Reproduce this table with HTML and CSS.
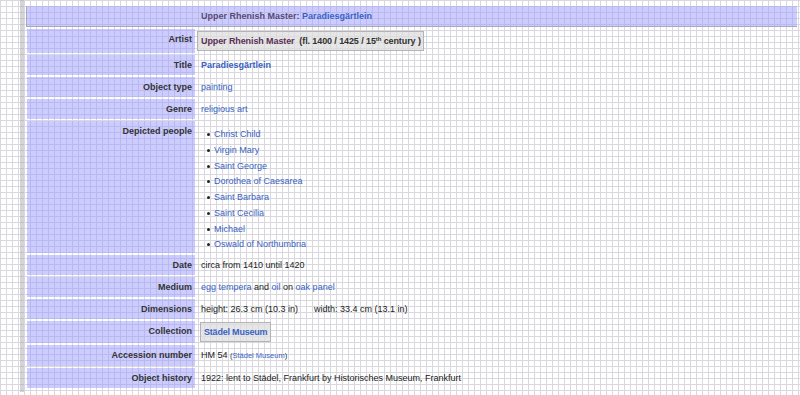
FILE: index.html
```html
<!DOCTYPE html>
<html>
<head>
<meta charset="utf-8">
<link rel="stylesheet" href="styles.css">
</head>
<body>
<div class="page">
  <div class="infobox">
    <div class="head"><span class="head-creator">Upper Rhenish Master:</span> <a class="link">Paradiesgärtlein</a></div>

    <div class="label">Artist</div>
    <div class="value boxed"><span class="box"><span class="creator">Upper Rhenish Master</span>&nbsp; (fl. 1400 / 1425 / 15<sup>th</sup> century )</span></div>

    <div class="label">Title</div>
    <div class="value"><a class="link bold">Paradiesgärtlein</a></div>

    <div class="label">Object type</div>
    <div class="value"><a class="link">painting</a></div>

    <div class="label">Genre</div>
    <div class="value"><a class="link">religious art</a></div>

    <div class="label">Depicted people</div>
    <div class="value list-cell">
      <ul class="people">
        <li><a class="link">Christ Child</a></li>
        <li><a class="link">Virgin Mary</a></li>
        <li><a class="link">Saint George</a></li>
        <li><a class="link">Dorothea of Caesarea</a></li>
        <li><a class="link">Saint Barbara</a></li>
        <li><a class="link">Saint Cecilia</a></li>
        <li><a class="link">Michael</a></li>
        <li><a class="link">Oswald of Northumbria</a></li>
      </ul>
    </div>

    <div class="label">Date</div>
    <div class="value">circa from 1410 until 1420</div>

    <div class="label">Medium</div>
    <div class="value"><a class="link">egg tempera</a> and <a class="link">oil</a> on <a class="link">oak panel</a></div>

    <div class="label">Dimensions</div>
    <div class="value"><span class="dim">height: 26.3 cm (10.3 in)</span><span>width: 33.4 cm (13.1 in)</span></div>

    <div class="label">Collection</div>
    <div class="value boxed-coll"><span class="box box-coll"><a class="link bold">Städel Museum</a></span></div>

    <div class="label">Accession number</div>
    <div class="value">HM 54 <span class="small">(<a class="link">Städel Museum</a>)</span></div>

    <div class="label">Object history</div>
    <div class="value">1922: lent to Städel, Frankfurt by Historisches Museum, Frankfurt</div>
  </div>
</div>
</body>
</html>
```

FILE: styles.css
```css
html, body {
  margin: 0;
  padding: 0;
}

body {
  width: 800px;
  height: 395px;
  overflow: hidden;
  background-color: #ffffff;
  background-image:
    linear-gradient(to right, #d8d8de 1px, transparent 1px),
    linear-gradient(to bottom, #d8d8de 1px, transparent 1px);
  background-size: 6px 6px;
  font-family: "Liberation Sans", Arial, sans-serif;
  font-size: 9px;
  color: #222222;
}

.page {
  margin-left: 20px;
  border-left: 4px solid rgba(170, 170, 175, 0.5);
  padding: 6px 3px 4px 3px;
}

.infobox {
  display: grid;
  grid-template-columns: 168px 1fr;
  column-gap: 2px;
  row-gap: 2px;
}

.head {
  grid-column: 1 / -1;
  height: 20px;
  line-height: 20px;
  padding-left: 174px;
  background: rgba(153, 153, 255, 0.5);
  border-left: 1px solid #a8a8c0;
  border-bottom: 1px solid #a8a8b8;
  margin-left: -1px;
  font-weight: bold;
}

.head-creator {
  color: #5a4a6e;
}

.label {
  background: rgba(153, 153, 255, 0.5);
  text-align: right;
  font-weight: bold;
  color: #333333;
  padding: 4px 3px 4px 0;
  line-height: 12px;
}

.value {
  padding: 4px 4px;
  line-height: 12px;
  white-space: nowrap;
}

.link {
  color: #3a62c2;
  text-decoration: none;
}

.bold {
  font-weight: bold;
}

.value.boxed {
  padding: 2px 0 2px 0;
}

.box {
  display: inline-block;
  height: 18px;
  line-height: 18px;
  padding: 0 2px 0 3px;
  background: rgba(222, 222, 222, 0.75);
  border: 1px solid #b4b4b4;
  font-weight: bold;
  color: #333333;
  white-space: nowrap;
  vertical-align: top;
  letter-spacing: -0.1px;
}

.box sup {
  font-size: 6px;
  line-height: 0;
  vertical-align: 3px;
}

.creator {
  color: #5b2f55;
}

.value.boxed-coll {
  padding: 1px 0 1px 3px;
}

.box-coll {
  padding: 0 3px;
  letter-spacing: -0.2px;
}

.list-cell {
  padding-top: 6px;
  padding-bottom: 0;
}

.people {
  margin: 0;
  padding: 0 0 0 13px;
  list-style: none;
}

.people li {
  height: 15.75px;
  line-height: 15.75px;
  position: relative;
}

.people li::before {
  content: "";
  position: absolute;
  left: -7px;
  top: 6px;
  width: 3px;
  height: 3px;
  border-radius: 50%;
  background: #222222;
}

.dim {
  margin-right: 16px;
}

.small {
  font-size: 7.5px;
}
```
